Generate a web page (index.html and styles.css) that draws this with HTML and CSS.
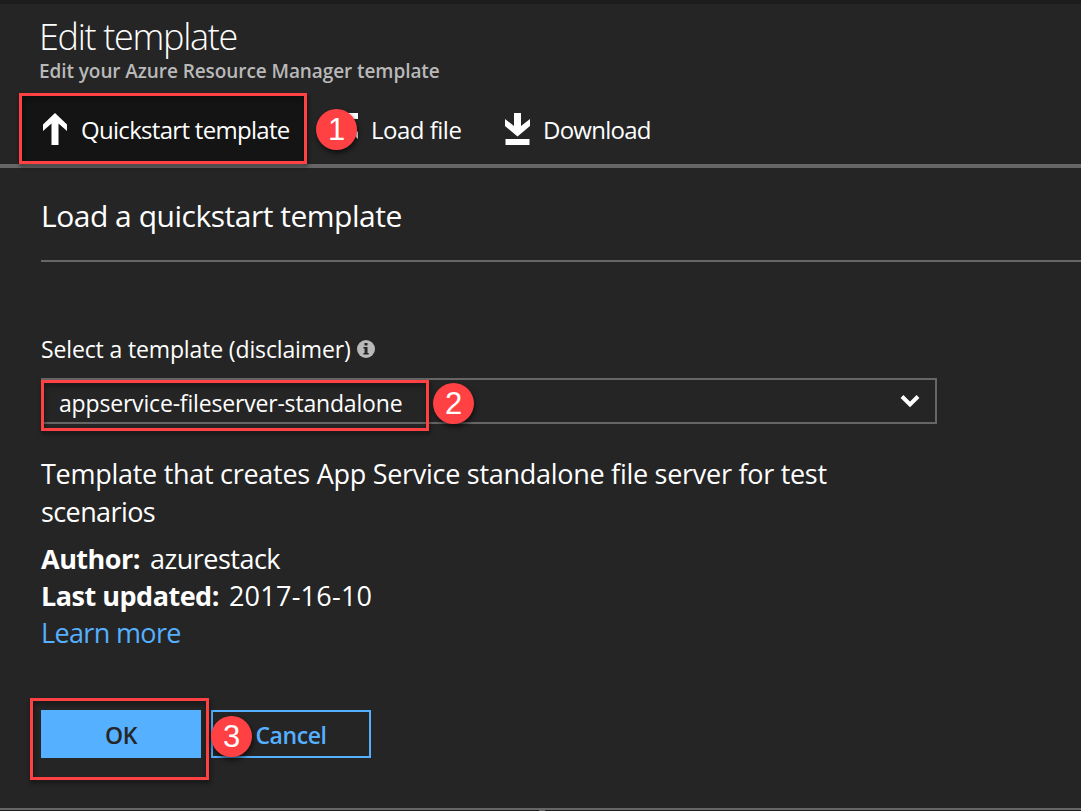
FILE: index.html
```html
<!DOCTYPE html>
<html lang="en">
<head>
<meta charset="utf-8">
<title>Edit template</title>
<link rel="stylesheet" href="styles.css">
</head>
<body>
<main class="blade">
  <header class="header">
    <h1 class="title"><span>Edit template</span></h1>
    <p class="subtitle"><span>Edit your Azure Resource Manager template</span></p>
  </header>
  <nav class="toolbar">
    <button class="tool tool-active">
      <svg class="icon" width="26" height="32" viewBox="0 0 26 32"><path d="M13 0 25 11.5V18L16.5 10.5V32H9.5V10.5L1 18V11.5Z"/></svg>
      <span class="t-quick">Quickstart template</span>
    </button>
    <button class="tool tool-load">
      <svg class="icon" width="26" height="32" viewBox="0 0 26 32"><path d="M1 0H25V6H1ZM13 8 25 19V26L16.5 18V32H9.5V18L1 26V19Z"/></svg>
      <span class="t-load">Load file</span>
    </button>
    <button class="tool tool-download">
      <svg class="icon" width="26" height="32" viewBox="0 0 26 32"><path d="M10 0H17V13L26 6V13L13.5 23.5 1 13V6L10 13ZM1.5 26H25.5V32H1.5Z"/></svg>
      <span class="t-down">Download</span>
    </button>
    <i class="outline outline-1"></i><b class="badge badge-1">1</b>
  </nav>
  <section class="content">
    <h2 class="heading"><span>Load a quickstart template</span></h2>
    <div class="label"><span>Select a template (disclaimer)</span>
      <svg class="info" width="18" height="18" viewBox="0 0 18 18"><circle cx="9" cy="9" r="9" fill="#b9b9b9"/><path d="M7.5 3h3v2.5h-3zM6.4 7h4.1v6h1.2v1.6H6.4V13h1.2V8.6H6.4z" fill="#252525"/></svg>
    </div>
    <div class="select">
      <span class="value">appservice-fileserver-standalone</span>
      <svg width="20" height="14" viewBox="0 0 20 14"><path d="M2 2.5 10 10.5 18 2.5" fill="none" stroke="#fff" stroke-width="4"/></svg>
      <i class="outline outline-2"></i><b class="badge badge-2">2</b>
    </div>
    <p class="description"><span class="d1">Template that creates App Service standalone file server for test</span><br><span class="d2">scenarios</span></p>
    <p class="meta"><strong class="m1">Author:</strong><span class="m2">azurestack</span></p>
    <p class="meta"><strong class="m3">Last updated:</strong><span class="m4">2017-16-10</span></p>
    <p class="meta"><a class="link">Learn more</a></p>
    <div class="actions">
      <button class="btn btn-primary"><span>OK</span></button>
      <button class="btn btn-cancel"><span>Cancel</span></button>
      <i class="outline outline-3"></i><b class="badge badge-3">3</b>
    </div>
  </section>
  <footer class="footer"><i class="grip"></i></footer>
</main>
</body>
</html>
```
FILE: styles.css
```css
* { box-sizing: border-box; margin: 0; padding: 0; }
body { background: #252525; color: #fff; font-family: "Open Sans", "Noto Sans", sans-serif; overflow: hidden; }
button { font: inherit; color: inherit; background: none; border: 0; }
.blade { display: flex; flex-direction: column; width: 1081px; height: 811px; border-top: 4px solid #1d1d1d; white-space: nowrap; }
.header { height: 89px; padding: 9px 0 0 39px; }
.title { font-size: 36px; font-weight: 300; line-height: 48px; letter-spacing: -1.3px; }
.subtitle { margin-top: -2px; font-size: 19px; font-weight: 600; line-height: 24px; color: #b9b9b9; letter-spacing: -0.08px; }
.toolbar { position: relative; display: flex; height: 75px; border-bottom: 4px solid #666; padding-left: 19px; font-size: 24px; }
.tool { display: flex; align-items: center; height: 71px; gap: 13px; line-height: 34px; }
.tool span { padding-top: 3px; }
.icon { fill: #fff; flex: none; }
.tool-active { width: 288px; padding-left: 23px; background: #141414; }
.tool-load { width: 185px; padding-left: 26px; gap: 12px; }
.tool-download { padding-left: 12px; }
.t-quick { letter-spacing: -0.7px; }
.t-load { letter-spacing: -0.5px; }
.t-down { letter-spacing: -0.75px; }
.content { flex: 1; padding-left: 41px; }
.heading { height: 94px; padding-top: 26px; border-bottom: 2px solid #666; font-size: 30px; font-weight: 400; line-height: 44px; letter-spacing: -0.48px; }
.label { display: flex; align-items: center; gap: 6px; height: 34px; margin-top: 70px; font-size: 23px; letter-spacing: -0.14px; }
.info { flex: none; }
.select { position: relative; display: flex; align-items: center; justify-content: space-between; width: 896px; height: 46px; margin-top: 12px; padding: 0 15px 0 16px; border: 2px solid #666; font-size: 23px; }
.value { padding-top: 4px; letter-spacing: -0.18px; }
.description { margin-top: 31px; font-size: 27px; line-height: 38px; }
.d1 { letter-spacing: -0.28px; }
.d2 { letter-spacing: -0.6px; }
.meta { font-size: 27px; line-height: 37px; display: flex; gap: 10px; }
.description + .meta { margin-top: 9px; }
.m1, .m3 { letter-spacing: -0.5px; }
.m2 { letter-spacing: -0.5px; }
.m4 { letter-spacing: 0.25px; }
.link { color: #55b0ff; letter-spacing: -0.65px; }
.actions { position: relative; display: flex; gap: 10px; margin-top: 59px; }
.btn { width: 160px; height: 48px; font-size: 23px; font-weight: 600; }
.btn span { display: block; padding-top: 2px; letter-spacing: -0.4px; }
.btn-primary { background: #55b0ff; color: #252525; }
.btn-cancel { border: 2px solid #55b0ff; color: #55b0ff; }
.outline { position: absolute; border: 3px solid #ff4143; filter: drop-shadow(1px 3px 2px rgba(0, 0, 0, .5)); }
.outline-1 { left: 19px; top: 0; width: 288px; height: 71px; }
.outline-2 { left: -2px; top: 0; width: 388px; height: 51px; }
.outline-3 { left: -11px; top: -12px; width: 179px; height: 82px; }
.badge { position: absolute; width: 41px; height: 41px; border-radius: 50%; background: #ff4143; box-shadow: 1px 3px 5px rgba(0, 0, 0, .6); font: 400 31px/42px "Liberation Sans", sans-serif; text-align: center; letter-spacing: 0; }
.badge-1 { left: 316px; top: 16px; }
.badge-2 { left: 390px; top: 3px; }
.badge-3 { left: 170px; top: 6px; }
.footer { position: relative; flex: none; height: 3px; border-top: 2px solid #666; background: #1d1d1d; }
.grip { position: absolute; left: 539px; top: 0; width: 6px; height: 1px; background: #666; }
```
